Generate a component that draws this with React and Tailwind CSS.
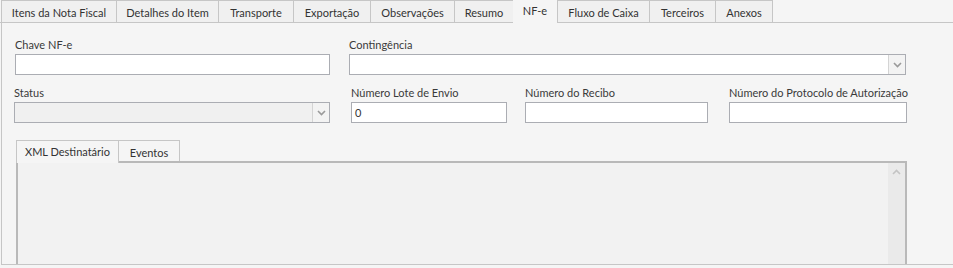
import React from 'react';

const tabs = [
  { label: 'Itens da Nota Fiscal', w: 116 },
  { label: 'Detalhes do Item', w: 103 },
  { label: 'Transporte', w: 76 },
  { label: 'Exportação', w: 78 },
  { label: 'Observações', w: 85 },
  { label: 'Resumo', w: 60 },
  { label: 'NF-e', w: 44, active: true },
  { label: 'Fluxo de Caixa', w: 93 },
  { label: 'Terceiros', w: 67 },
  { label: 'Anexos', w: 58 },
];

function Chevron({ up }) {
  return (
    <svg width="9" height="6" viewBox="0 0 9 6" className="block">
      <polyline
        points={up ? '1,5 4.5,1.5 8,5' : '1,1 4.5,4.5 8,1'}
        fill="none"
        stroke={up ? '#c4c4c4' : '#9a9a9a'}
        strokeWidth="1.6"
      />
    </svg>
  );
}

function Field({ label, className, children }) {
  return (
    <div className={className}>
      <div className="h-[15px] leading-[15px] mb-[2px] whitespace-nowrap text-[#3a3a3a]">{label}</div>
      {children}
    </div>
  );
}

function TextBox({ value, disabled }) {
  return (
    <div className={`h-[21px] border border-[#abadb3] px-[3px] leading-[19px] ${disabled ? 'bg-[#f0f0f0]' : 'bg-white'}`}>
      {value}
    </div>
  );
}

function Select({ disabled }) {
  return (
    <div className={`h-[21px] border border-[#abadb3] flex ${disabled ? 'bg-[#f0f0f0]' : 'bg-white'}`}>
      <div className="flex-1" />
      <div className="w-[17px] border-l border-[#d4d4d4] bg-[#f3f3f3] flex items-center justify-center">
        <Chevron />
      </div>
    </div>
  );
}

export default function App() {
  return (
    <div
      className="w-[953px] h-[268px] bg-[#f5f5f5] overflow-hidden text-[11px] text-[#333]"
      style={{ fontFamily: 'Lato, "DejaVu Sans", sans-serif' }}
    >
      {/* Abas principais */}
      <div className="flex items-end h-[23px] pl-px border-b border-[#c6c6c6]">
        {tabs.map((t) => (
          <div
            key={t.label}
            style={{ width: t.w }}
            className={
              t.active
                ? 'h-[23px] -mb-px bg-[#f5f5f5] flex justify-center pt-[3px] leading-[15px]'
                : 'h-[22px] bg-[#f0f0f0] border-t border-l border-r border-[#c6c6c6] -mr-px last:mr-0 flex justify-center pt-[4px] leading-[15px]'
            }
          >
            {t.label}
          </div>
        ))}
      </div>

      {/* Conteúdo da aba NF-e */}
      <div className="h-[242px] ml-px border-l border-b border-[#c6c6c6] pl-[12px] pt-[14px] overflow-hidden">
        <div className="flex">
          <Field label="Chave NF-e" className="w-[316px] pl-px">
            <TextBox />
          </Field>
          <Field label="Contingência" className="w-[557px] ml-[19px]">
            <Select />
          </Field>
        </div>

        <div className="flex mt-[10px]">
          <Field label="Status" className="w-[316px] text-[#8a8a8a]">
            <Select disabled />
          </Field>
          <Field label="Número Lote de Envio" className="w-[156px] ml-[21px]">
            <TextBox value="0" />
          </Field>
          <Field label="Número do Recibo" className="w-[183px] ml-[18px]">
            <TextBox />
          </Field>
          <Field label="Número do Protocolo de Autorização" className="w-[178px] ml-[21px]">
            <TextBox />
          </Field>
        </div>

        {/* Abas internas */}
        <div className="mt-[15px] ml-[2px] w-[891px]">
          <div className="flex items-end h-[23px]">
            <div className="w-[103px] h-[23px] -mb-[2px] bg-[#f5f5f5] border-t border-l border-r border-[#c6c6c6] flex justify-center pt-[3px] leading-[15px] relative z-10">
              XML Destinatário
            </div>
            <div className="w-[61px] h-[21px] bg-[#f5f5f5] border-t border-r border-[#c6c6c6] flex justify-center pt-[4px] leading-[15px]">
              Eventos
            </div>
          </div>
          <div className="h-[110px] border-2 border-b-0 border-[#b9b9b9] bg-[#f2f2f2] flex justify-end">
            <div className="w-[17px] bg-[#eaeaea] flex justify-center pt-[6px]">
              <Chevron up />
            </div>
          </div>
        </div>
      </div>
    </div>
  );
}
